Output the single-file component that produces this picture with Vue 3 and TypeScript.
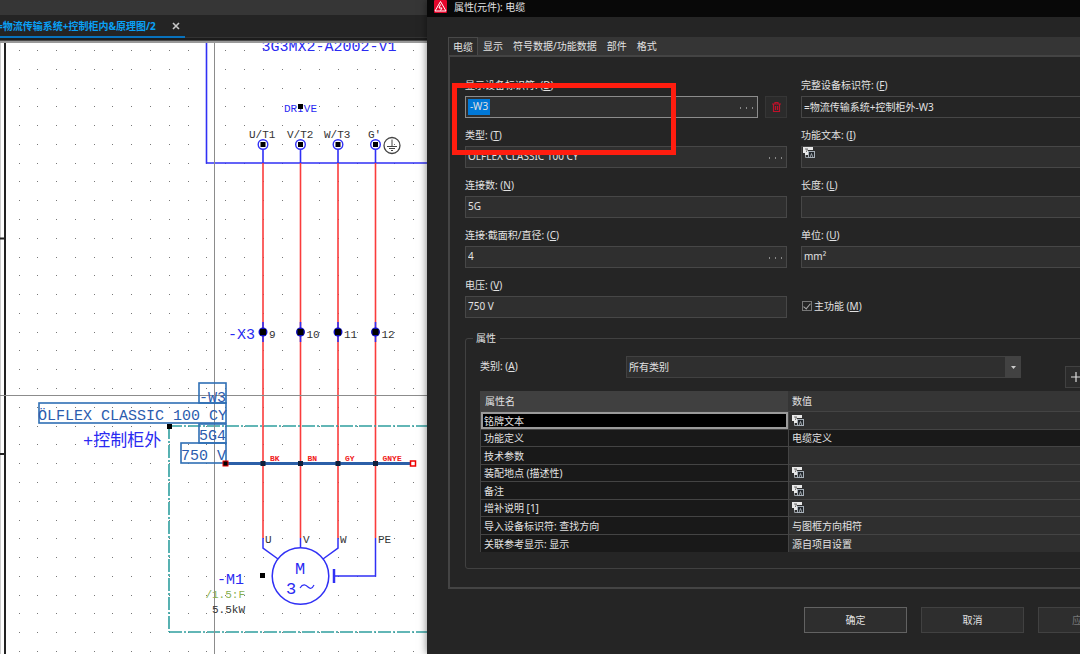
<script setup lang="ts">
import { ref } from 'vue'

interface Row {
  name: string
  value: string
  translated?: boolean
  dark?: boolean
}

const step = 18.78
const dots: { x: number; y: number }[] = []
for (let j = 0; j < 33; j++) {
  for (let i = 0; i < 23; i++) {
    dots.push({ x: Math.round(step * i - 0.2), y: Math.round(50 + step * j) })
  }
}

const wires = [
  { x: 263, terminal: 'U/T1', tx: 249, strip: '9', color: 'BK' },
  { x: 300.500, terminal: 'V/T2', tx: 287, strip: '10', color: 'BN' },
  { x: 338, terminal: 'W/T3', tx: 324, strip: '11', color: 'GY' },
  { x: 375.500, terminal: "G'", tx: 368, strip: '12', color: 'GNYE' },
]

const tabs = ['电缆', '显示', '符号数据/功能数据', '部件', '格式']

const rows: Row[] = [
  { name: '铭牌文本', value: '', translated: true },
  { name: '功能定义', value: '电缆定义', dark: true },
  { name: '技术参数', value: '' },
  { name: '装配地点 (描述性)', value: '', translated: true },
  { name: '备注', value: '', translated: true },
  { name: '增补说明 [1]', value: '', translated: true },
  { name: '导入设备标识符: 查找方向', value: '与图框方向相符' },
  { name: '关联参考显示: 显示', value: '源自项目设置' },
]

const tag = ref('-W3')
const cableType = ref('ÖLFLEX CLASSIC 100 CY')
const count = ref('5G')
const section = ref('4')
const voltage = ref('750 V')
const fullTag = ref('=物流传输系统+控制柜外-W3')
const funcText = ref('')
const length = ref('')
const unit = ref('mm²')
const mainFunction = ref(true)
const category = ref('所有类别')
</script>

<template>
  <div class="app">
    <svg class="defs" width="0" height="0" aria-hidden="true">
      <symbol id="lang" viewBox="0 0 12 12">
        <path d="M0 0h10v3H5v5H2V6H0z" fill="#e8e8e8" />
        <path d="M2 2h3M4 2v2M3 4.500h1" stroke="#555" stroke-width=".8" />
        <path d="M2.500 8v2.500h2.500" fill="none" stroke="#9aa0a6" />
        <rect x="5.500" y="4.500" width="6" height="6" fill="#23282d" stroke="#a8b0b8" />
        <path d="M7.200 10L8.500 6.500L9.800 10" fill="none" stroke="#b8bec4" stroke-width=".8" />
      </symbol>
    </svg>

    <section class="editor">
      <div class="toolbar"></div>
      <nav class="doc-tabs">
        <div class="doc-tab">
          <a href="#page">=物流传输系统+控制柜内&amp;原理图/2</a>
          <button type="button" aria-label="关闭">
            <svg width="8" height="8" viewBox="0 0 8 8"><path d="M1 1l6 6M7 1L1 7" stroke="#c8c8c8" stroke-width="1.600" /></svg>
          </button>
        </div>
      </nav>
      <div class="tab-edge"></div>
      <svg class="schematic" width="427" height="611" viewBox="0 43 427 611">
        <rect v-for="(d, i) in dots" :key="i" :x="d.x" :y="d.y" width="1" height="1" fill="#777" />
        <path d="M0.500 43V654" stroke="#ccc" />
        <path d="M5 43V654" stroke="#222" stroke-width="2" />
        <path d="M0 238.500H5M0 454H5" stroke="#222" stroke-width="2" />

        <path d="M206.500 43V163H427" fill="none" stroke="#3030f5" stroke-width="1.600" />
        <text x="329" y="51" text-anchor="middle" class="blue t15">3G3MX2-A2002-V1</text>
        <text x="284" y="112" class="blue t11">DRIVE</text>
        <rect x="298" y="104" width="5" height="5" />

        <g v-for="w in wires" :key="w.x">
          <path :d="`M${w.x} 163V538`" stroke="#fa3c3c" stroke-width="1.600" />
          <path :d="`M${w.x} 149V163M${w.x} 322V342`" stroke="#3030f5" stroke-width="1.600" />
          <circle :cx="w.x" cy="144.500" r="4.800" fill="#fff" stroke="#3030f5" stroke-width="1.400" />
          <rect :x="w.x - 2.500" y="142" width="5" height="5" />
          <text :x="w.tx" y="138" class="dark t11">{{ w.terminal }}</text>
          <circle :cx="w.x" cy="332" r="4.500" fill="#1010c0" />
          <rect :x="w.x - 3" y="329" width="6" height="6" />
          <text :x="w.x + 6" y="338" class="dark t11">{{ w.strip }}</text>
        </g>

        <g fill="none" stroke="#444">
          <circle cx="392" cy="145.500" r="8" stroke-width="1.300" />
          <path d="M392 139.500V146M387 146.500H397M389 148.500H395M391 150.500H393" />
        </g>
        <text x="228" y="339" class="blue t15">-X3</text>

        <g fill="none" stroke="#2f9f9f" stroke-width="1.600" stroke-dasharray="13 2 2 2">
          <path d="M169 426H427M169 426V632M169 632H427" />
        </g>
        <rect x="167" y="424" width="5" height="5" />
        <path d="M214.500 43V654M0 395.500H427" stroke="#8c8c8c" />

        <g fill="none" stroke="#2f6fb5" stroke-width="1.600">
          <rect x="199" y="383" width="27" height="20" />
          <rect x="39" y="403" width="187" height="20" />
          <rect x="199" y="424" width="27" height="19" />
          <rect x="181" y="443" width="45" height="20" />
        </g>
        <text x="226" y="402" text-anchor="end" class="steel t15">-W3</text>
        <text x="227" y="420" text-anchor="end" class="steel t15">ÖLFLEX CLASSIC 100 CY</text>
        <text x="226" y="440" text-anchor="end" class="steel t15">5G4</text>
        <text x="226" y="460" text-anchor="end" class="steel t15">750 V</text>
        <text x="83" y="446" class="blue t17">+控制柜外</text>

        <path d="M226 463.500H413" stroke="#2b5fa8" stroke-width="3" />
        <g v-for="w in wires" :key="w.color">
          <rect :x="w.x - 2.500" y="461" width="5" height="5" fill="#10203c" />
          <text :x="w.x + 7" y="461" class="red t8">{{ w.color }}</text>
        </g>
        <rect x="223" y="461" width="5" height="5" fill="#000" stroke="#e00" />
        <rect x="410.500" y="461" width="5" height="5" fill="#fff" stroke="#e00" stroke-width="1.500" />

        <g fill="none" stroke="#3030f5" stroke-width="1.500">
          <path d="M263 538V548L278 559M300.500 538V548M338 538V548L323 559M375.500 538V576H334" />
          <path d="M334 569V583" stroke-width="2.500" />
          <circle cx="300.500" cy="576" r="28.300" fill="#fff" />
        </g>
        <text x="265" y="543" class="dark t11">U</text>
        <text x="303" y="543" class="dark t11">V</text>
        <text x="340" y="543" class="dark t11">W</text>
        <text x="378" y="543" class="dark t11">PE</text>
        <text x="300" y="574" text-anchor="middle" class="blue t17">M</text>
        <text x="286" y="594" class="blue t17">3</text>
        <path d="M300 588c3-5 6-3 8-1s4 2 6-2" fill="none" stroke="#3030f5" stroke-width="1.200" />
        <rect x="260" y="573" width="5" height="5" />
        <text x="244" y="584" text-anchor="end" class="blue t15">-M1</text>
        <text x="245" y="598" text-anchor="end" class="green t11">/1.5:F</text>
        <text x="245" y="613" text-anchor="end" class="dark t11">5.5kW</text>
      </svg>
    </section>

    <section class="dialog" role="dialog" aria-label="属性(元件): 电缆">
      <header class="titlebar">
        <svg width="13" height="13" viewBox="0 0 13 13">
          <rect width="13" height="13" rx="1" fill="#e3062c" />
          <path d="M6.500 1.500L12 11H1z" fill="none" stroke="#fff" />
          <path d="M6.500 4.500L5 8h3L6.500 10.500" fill="none" stroke="#fff" />
        </svg>
        <h1>属性(元件): 电缆</h1>
      </header>

      <div class="body">
        <div class="tabs" role="tablist">
          <button v-for="(t, i) in tabs" :key="t" type="button" role="tab" :aria-selected="i === 0" :class="{ active: i === 0 }">{{ t }}</button>
        </div>

        <div class="panel">
          <div class="form">
            <div class="field">
              <label for="tag">显示设备标识符: (<u>D</u>)</label>
              <div class="line">
                <div class="box focused">
                  <span class="selected"><input id="tag" v-model="tag" class="short" type="text" /></span>
                  <button type="button" class="more" aria-label="浏览"><svg width="14" height="2"><path d="M1 0h1v2H1zM7 0h1v2H7zM13 0h1v2h-1z" /></svg></button>
                </div>
                <button type="button" class="trash" aria-label="删除">
                  <svg width="9" height="10" viewBox="0 0 9 10" fill="none" stroke="#c0102a"><path d="M0 2h9M3 2V.5h3V2M1.500 2.500V9.500H7.500V2.500M3.500 4V8M5.500 4V8" stroke-width="1.200" /></svg>
                </button>
              </div>
            </div>
            <div class="field">
              <label for="full">完整设备标识符: (<u>F</u>)</label>
              <div class="box plain"><input id="full" v-model="fullTag" type="text" /></div>
            </div>
            <div class="field">
              <label for="type">类型: (<u>T</u>)</label>
              <div class="box">
                <input id="type" v-model="cableType" type="text" />
                <button type="button" class="more" aria-label="浏览"><svg width="14" height="2"><path d="M1 0h1v2H1zM7 0h1v2H7zM13 0h1v2h-1z" /></svg></button>
              </div>
            </div>
            <div class="field">
              <label for="func">功能文本: (<u>I</u>)</label>
              <div class="box icon-box">
                <svg width="12" height="12"><use href="#lang" /></svg>
                <input id="func" v-model="funcText" type="text" />
              </div>
            </div>
            <div class="field">
              <label for="count">连接数: (<u>N</u>)</label>
              <div class="box"><input id="count" v-model="count" type="text" /></div>
            </div>
            <div class="field">
              <label for="length">长度: (<u>L</u>)</label>
              <div class="box"><input id="length" v-model="length" type="text" /></div>
            </div>
            <div class="field">
              <label for="section">连接:截面积/直径: (<u>C</u>)</label>
              <div class="box">
                <input id="section" v-model="section" type="text" />
                <button type="button" class="more" aria-label="浏览"><svg width="14" height="2"><path d="M1 0h1v2H1zM7 0h1v2H7zM13 0h1v2h-1z" /></svg></button>
              </div>
            </div>
            <div class="field">
              <label for="unit">单位: (<u>U</u>)</label>
              <div class="box"><input id="unit" v-model="unit" type="text" /></div>
            </div>
            <div class="field">
              <label for="voltage">电压: (<u>V</u>)</label>
              <div class="box"><input id="voltage" v-model="voltage" type="text" /></div>
            </div>
            <div class="field check-field">
              <label class="check"><input v-model="mainFunction" type="checkbox" /><span>主功能 (<u>M</u>)</span></label>
            </div>
          </div>

          <fieldset class="group">
            <legend>属性</legend>
            <div class="filter">
              <label for="category">类别: (<u>A</u>)</label>
              <div class="select">
                <select id="category" v-model="category"><option>所有类别</option></select>
                <span class="arrow"><svg width="5" height="3"><path d="M0 0h5L2.500 3z" fill="#ccc" /></svg></span>
              </div>
              <button type="button" class="add" aria-label="添加"><svg width="10" height="10"><path d="M5 0v10M0 5h10" stroke="#ddd" stroke-width="1.200" /></svg></button>
            </div>
            <table>
              <thead>
                <tr><th scope="col" class="name-col">属性名</th><th scope="col">数值</th></tr>
              </thead>
              <tbody>
                <tr v-for="(r, i) in rows" :key="r.name">
                  <td :class="['name', { current: i === 0 }]">{{ r.name }}</td>
                  <td :class="{ dim: r.dark }">
                    <svg v-if="r.translated" class="cell-icon" width="12" height="12"><use href="#lang" /></svg>
                    <template v-else>{{ r.value }}</template>
                  </td>
                </tr>
              </tbody>
            </table>
          </fieldset>
        </div>

        <footer class="actions">
          <button type="button" class="primary">确定</button>
          <button type="button">取消</button>
          <button type="button" disabled>应用 (<u>A</u>)</button>
        </footer>
      </div>
      <div class="marker"></div>
    </section>
  </div>
</template>

<style>
body {
  margin: 0;
  background: #252525;
}
</style>

<style scoped>
* {
  box-sizing: border-box;
}
.app {
  display: grid;
  grid-template-columns: 427px minmax(0, 1fr);
  min-height: 100vh;
  overflow: hidden;
  font: 10px/14px "Noto Sans", "Noto Sans CJK SC", sans-serif;
  color: #e2e2e2;
}
.defs {
  position: absolute;
}
button,
input,
select {
  font: inherit;
  color: inherit;
  margin: 0;
  padding: 0;
  border: 0;
  border-radius: 0;
  background: none;
  outline: 0;
}
u {
  text-underline-offset: 1px;
}

.editor {
  background: #fff;
  overflow: hidden;
}
.toolbar {
  height: 15px;
  background: #363636;
}
.doc-tabs {
  display: flex;
  height: 22px;
  background: #242424;
}
.doc-tab {
  display: flex;
  align-items: center;
  width: 185px;
  height: 23px;
  border-bottom: 2px solid #0872bd;
}
.doc-tab a {
  flex: 0 0 auto;
  width: 173px;
  margin-left: -3px;
  color: #0aa0f5;
  font-weight: 700;
  text-decoration: none;
  white-space: nowrap;
}
.doc-tab button {
  display: flex;
  padding: 2px;
}
.tab-edge {
  height: 6px;
  background: linear-gradient(#333 0 1px, #1c1c1c 1px 3px, #4a4a4a 3px 4px, #999 4px 6px);
}
.schematic {
  display: block;
  font-family: "Liberation Mono", "Noto Sans CJK SC", monospace;
}
.blue { fill: #2a2af2; }
.dark { fill: #333; }
.steel { fill: #2c5cae; }
.red { fill: #f02020; font-weight: 700; }
.green { fill: #86b050; }
.t8 { font-size: 8px; }
.t11 { font-size: 11px; }
.t15 { font-size: 15px; }
.t17 { font-size: 17px; }

.dialog {
  position: relative;
  background: #252525;
  box-shadow: 0 0 8px rgba(0, 0, 0, 0.5);
}
.titlebar {
  display: flex;
  align-items: center;
  gap: 7px;
  height: 17px;
  padding: 0 7px 4px;
  background: #080808;
}
.titlebar h1 {
  margin: 0;
  font-size: 10px;
  font-weight: 400;
}
.body {
  min-width: 714px;
  padding: 20px 0 0 21px;
}
.tabs {
  display: flex;
  height: 18px;
  background: #353535;
}
.tabs button {
  padding: 0 5px;
  white-space: nowrap;
}
.tabs .active {
  padding: 0 4px;
  background: #2b2b2b;
  border: 1px solid #494949;
  border-bottom: 0;
}
.panel {
  border: 2px solid #444;
  padding: 21px 16px 18px 15px;
}
.form {
  display: grid;
  grid-template-columns: 1fr 1fr;
  gap: 10px 14px;
}
.field {
  display: flex;
  flex-direction: column;
  gap: 4px;
  min-width: 0;
}
.line {
  display: flex;
  gap: 7px;
}
.box {
  display: flex;
  align-items: center;
  flex: 1;
  height: 22px;
  min-height: 22px;
  padding: 0 4px 0 2px;
  background: #2f2f2f;
  border: 1px solid #474747;
}
.box input {
  flex: 1;
  min-width: 0;
  width: 100%;
  height: 16px;
  padding-bottom: 2px;
}
.focused {
  border-color: #8c8c8c;
  justify-content: space-between;
}
.plain {
  background: #252525;
}
.selected {
  display: flex;
  background: #0078d7;
}
.box .short {
  width: 22px;
  text-align: center;
}
.icon-box {
  padding-left: 1px;
}
.icon-box svg {
  margin-bottom: 8px;
}
.more {
  display: flex;
  padding-top: 2px;
}
.more svg {
  fill: #8a8a8a;
}
.trash {
  display: flex;
  align-items: center;
  justify-content: center;
  width: 22px;
  height: 22px;
  background: #2b2b2b;
  border: 1px solid #363636;
}
.check-field {
  justify-content: flex-end;
  padding-bottom: 5px;
}
.check {
  display: flex;
  align-items: center;
  gap: 2px;
}
.check input {
  appearance: none;
  display: flex;
  justify-content: center;
  width: 10px;
  height: 10px;
  margin-left: 1px;
  border: 1px solid #777;
}
.check input:checked::before {
  content: "";
  width: 3px;
  height: 6px;
  border: solid #aaa;
  border-width: 0 1px 1px 0;
  transform: rotate(40deg);
}

.group {
  min-width: 0;
  margin: 13px 0 0;
  padding: 11px 14px 16px;
  border: 1px solid #414141;
  border-radius: 3px;
}
.group legend {
  margin-left: -7px;
  padding: 0 4px 0 3px;
}
.filter {
  display: flex;
  align-items: flex-start;
  height: 35px;
}
.filter label {
  width: 146px;
  padding-top: 3px;
}
.select {
  position: relative;
  flex: 0 0 395px;
  height: 22px;
}
.select select {
  appearance: none;
  width: 100%;
  height: 22px;
  padding: 0 18px 0 2px;
  background: #2f2f2f;
  border: 1px solid #414141;
}
.arrow {
  position: absolute;
  top: 0;
  right: 0;
  display: flex;
  align-items: center;
  justify-content: center;
  width: 16px;
  height: 22px;
  background: #424242;
  pointer-events: none;
}
.add {
  display: flex;
  align-items: center;
  justify-content: center;
  width: 22px;
  height: 22px;
  margin: 10px 0 0 44px;
  background: #2b2b2b;
  border: 1px solid #414141;
}
table {
  width: 100%;
  table-layout: fixed;
  border-spacing: 0;
}
th {
  height: 21px;
  padding: 0 4px;
  text-align: left;
  font-weight: 400;
  background: #353535;
  border-bottom: 1px solid #444;
}
.name-col {
  width: 308px;
  padding-left: 5px;
  background: #404040;
}
td {
  height: 18px;
  padding: 0 3px;
  line-height: 14px;
  background: #2f2f2f;
  border-bottom: 1px solid #444;
  border-left: 1px solid #444;
}
tbody tr:nth-child(even) td {
  height: 17px;
}
tbody tr:last-child td {
  border-bottom: 0;
}
.name,
.dim {
  background: #191919;
}
.current {
  background: #000;
  box-shadow: inset 0 0 0 2px #9a9a9a;
}
.cell-icon {
  display: block;
}
.actions {
  display: flex;
  justify-content: flex-end;
  gap: 14px;
  padding: 18px 0 20px;
}
.actions button {
  width: 103px;
  height: 26px;
  background: #2e2e2e;
  border: 1px solid #414141;
}
.actions .primary {
  border-color: #626262;
}
.actions button:disabled {
  color: #777;
}
.marker {
  position: absolute;
  top: 83px;
  left: 25px;
  width: 224px;
  height: 72px;
  border: 5px solid #ff1d0f;
  pointer-events: none;
}
</style>
